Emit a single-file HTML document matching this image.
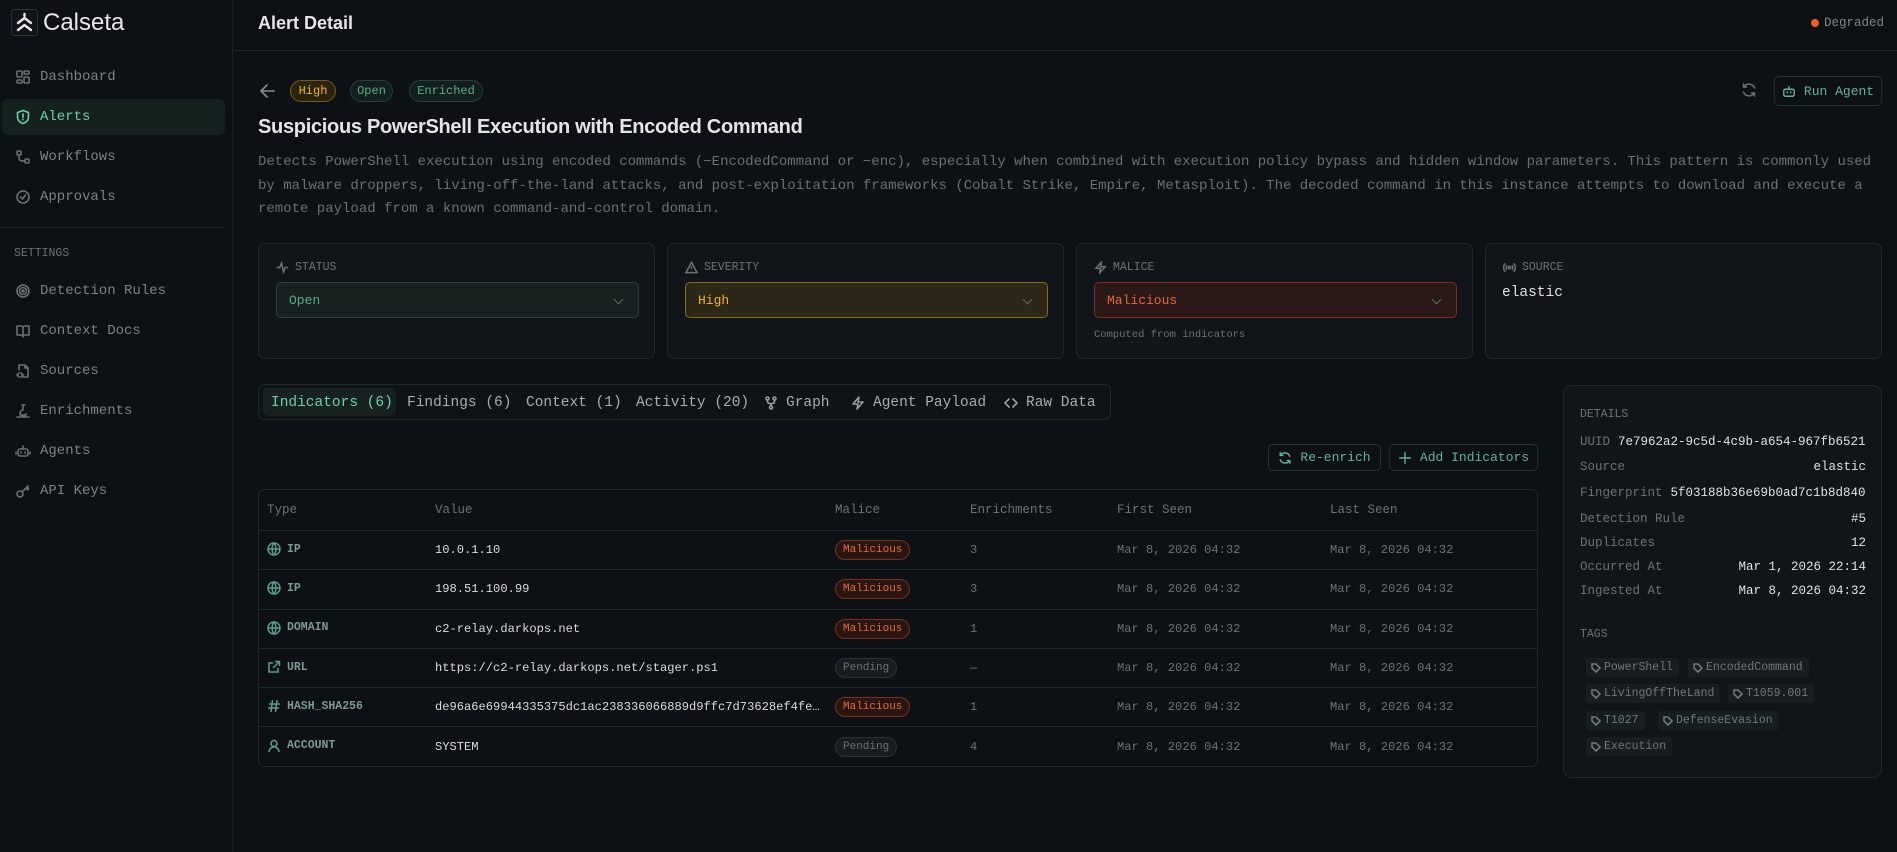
<!DOCTYPE html>
<html><head><meta charset="utf-8"><style>
*{box-sizing:border-box;margin:0;padding:0}
body{width:1897px;height:852px;background:#0d1014;color:#c9ccce;font-family:"Liberation Mono",monospace;overflow:hidden;position:relative}
.abs{position:absolute}
.sb{position:absolute;left:0;top:0;width:233px;height:852px;border-right:1px solid #1e2424;background:#0d1014}
.nav{position:absolute;left:2px;width:223px;height:36px;display:flex;align-items:center;padding-left:13px;font-size:14px;color:#7d8285;border-radius:6px}
.nav svg{width:16px;height:16px;margin-right:9px;fill:none;stroke:#6a7073;stroke-width:1.6;stroke-linecap:round;stroke-linejoin:round}
.nav.act{background:#15211f;color:#6fcdb0}
.nav.act svg{stroke:#6fcdb0}
.sans{font-family:"Liberation Sans",sans-serif}
.badge{position:absolute;top:80px;height:22px;border-radius:11px;font-size:12px;display:flex;align-items:center;justify-content:center}
.card{position:absolute;top:243px;width:397px;height:116px;border:1px solid #1e2a27;border-radius:7px;background:#111519}
.clab{position:absolute;left:17px;top:17px;font-size:11.5px;color:#6d7275;display:flex;align-items:center;gap:6px}
.clab svg{width:13px;height:13px;fill:none;stroke:#6d7275;stroke-width:1.6}
.sel{position:absolute;left:17px;top:38px;width:363px;height:36px;border-radius:5px;font-size:13px;display:flex;align-items:center;padding-left:12px}
.sel:after{content:"";position:absolute;right:16px;top:13px;width:6px;height:6px;border-right:1.3px solid #666;border-bottom:1.3px solid #666;transform:rotate(45deg)}
.tab{position:absolute;top:392px;font-size:14.5px;color:#a9adb0;display:flex;align-items:center;gap:8px;height:22px}
.tab svg{width:14px;height:14px;fill:none;stroke:#9a9ea0;stroke-width:1.6;stroke-linecap:round;stroke-linejoin:round}
.btn{position:absolute;top:444px;height:27px;border:1px solid #213430;border-radius:5px;color:#66b198;font-size:13px;display:flex;align-items:center;justify-content:center;gap:8px}
.btn svg{width:14px;height:14px;fill:none;stroke:#66b198;stroke-width:1.6;stroke-linecap:round}
table{position:absolute;left:258px;top:489px;width:1280px;border-collapse:separate;border-spacing:0;border:1px solid #1e2a27;border-radius:7px;font-size:12.1px}
td,th{height:39.3px;border-top:1px solid #1e2a27;text-align:left;font-weight:normal;padding:0;vertical-align:middle}
th{height:40px;border-top:none;color:#6d7275;font-size:12.5px}
td.ty{color:#7d9990;font-size:11.5px;font-weight:bold;padding-left:8px}
td.ty span{display:inline-flex;align-items:center;gap:6px;position:relative;top:1px}
td.ty svg{width:14px;height:14px;fill:none;stroke:#5f9c88;stroke-width:1.5}
td.v{color:#d9dbdc}
td.d{color:#6d7275}
td.e{color:#6d7275}
.mal{display:inline-block;height:20px;line-height:18px;padding:0 7px;border:1px solid #7a2e1c;background:#2a1611;color:#e8683a;border-radius:10px;font-size:11px}
.pen{display:inline-block;height:20px;line-height:18px;padding:0 7px;border:1px solid #2b3232;background:#171c1d;color:#6c7375;border-radius:10px;font-size:11px}
.det{position:absolute;left:1563px;top:385px;width:319px;height:393px;border:1px solid #1e2a27;border-radius:9px;background:#111519;overflow:hidden}
.dr{position:absolute;left:16px;width:286px;font-size:12.5px;display:flex;justify-content:space-between;white-space:nowrap;overflow:hidden}
.dr b{font-weight:normal;color:#6d7275;margin-right:8px}
.dr i{font-style:normal;color:#dfe1e2;overflow:hidden}
.tag{position:absolute;height:19px;background:#171d21;border-radius:3px;font-size:11.5px;color:#70787a;display:flex;align-items:center;padding:0 6px 0 5px;gap:3px}
.tag svg{width:10px;height:10px;fill:none;stroke:#70787a;stroke-width:1.6}
</style></head><body>
<div class="sb">
  <div class="abs" style="left:11px;top:9px;width:27px;height:27px;border:1px solid #2c3331;border-radius:3px;background:#111517">
    <svg width="25" height="25" viewBox="0 0 25 25" fill="none" stroke="#e6e6e6" stroke-width="2.4" stroke-linecap="round" stroke-linejoin="round"><path d="M12.5 4v2"/><path d="M6 13l6.5-5 6.5 5"/><path d="M6 20l6.5-5 6.5 5"/></svg>
  </div>
  <div class="abs sans" style="left:43px;top:9px;font-size:24px;color:#e8e8e8">Calseta</div>
  <div class="nav" style="top:59px"><svg viewBox="0 0 16 16"><rect x="2" y="2" width="5" height="6" rx="1"/><rect x="9" y="2" width="5" height="3" rx="1"/><rect x="9" y="8" width="5" height="6" rx="1"/><rect x="2" y="11" width="5" height="3" rx="1"/></svg>Dashboard</div>
  <div class="nav act" style="top:99px"><svg viewBox="0 0 16 16"><path d="M8 1.5l5.5 2v4.5c0 3.5-2.5 5.5-5.5 6.5-3-1-5.5-3-5.5-6.5V3.5z"/><path d="M8 5v3.5M8 10.5v.3"/></svg>Alerts</div>
  <div class="nav" style="top:139px"><svg viewBox="0 0 16 16"><rect x="2" y="2" width="4" height="4" rx="1"/><rect x="10" y="10" width="4" height="4" rx="1"/><path d="M4 6v3a3 3 0 003 3h3"/></svg>Workflows</div>
  <div class="nav" style="top:179px"><svg viewBox="0 0 16 16"><circle cx="8" cy="8" r="6"/><path d="M5.5 8l2 2 3-4"/></svg>Approvals</div>
  <div class="abs" style="left:0;top:227px;width:225px;height:1px;background:#23292a"></div>
  <div class="abs" style="left:14px;top:247px;font-size:11.5px;color:#6d7275">SETTINGS</div>
  <div class="nav" style="top:273px"><svg viewBox="0 0 16 16"><circle cx="8" cy="8" r="6"/><circle cx="8" cy="8" r="3.5"/><circle cx="8" cy="8" r="1"/></svg>Detection Rules</div>
  <div class="nav" style="top:313px"><svg viewBox="0 0 16 16"><path d="M2 3h4a2 2 0 012 2v9a2 2 0 00-2-2H2zM14 3h-4a2 2 0 00-2 2v9a2 2 0 012-2h4z"/></svg>Context Docs</div>
  <div class="nav" style="top:353px"><svg viewBox="0 0 16 16"><path d="M4 7V2h6l3 3v9H8"/><path d="M10 2v3h3M4 10l-2 2 2 2M6 10l2 2-2 2"/></svg>Sources</div>
  <div class="nav" style="top:393px"><svg viewBox="0 0 16 16"><path d="M2 14h12M5 12h6M7 2h3M8 2v5a3 3 0 103 4"/></svg>Enrichments</div>
  <div class="nav" style="top:433px"><svg viewBox="0 0 16 16"><rect x="3" y="6" width="10" height="7" rx="2"/><path d="M8 6V3M1 9v2M15 9v2M6 9v1M10 9v1"/></svg>Agents</div>
  <div class="nav" style="top:473px"><svg viewBox="0 0 16 16"><circle cx="5" cy="11" r="3"/><path d="M7 9l6-6M11 5l2 2M12 4l1.5 1.5"/></svg>API Keys</div>
</div>

<div class="abs" style="left:234px;top:50px;width:1663px;height:1px;background:#1e2a26"></div>
<div class="abs sans" style="left:258px;top:13px;font-size:18px;font-weight:bold;color:#e6e6e6">Alert Detail</div>
<div class="abs" style="left:1811px;top:19px;width:8px;height:8px;border-radius:50%;background:#ef5d22"></div>
<div class="abs" style="left:1824px;top:16px;font-size:12.5px;color:#818689">Degraded</div>

<svg class="abs" style="left:259px;top:83px" width="17" height="16" viewBox="0 0 17 16" fill="none" stroke="#8a8f92" stroke-width="1.6" stroke-linecap="round" stroke-linejoin="round"><path d="M15 8H2M8 2L2 8l6 6"/></svg>
<div class="badge" style="left:290px;width:46px;border:1px solid #7a5a14;background:#2a230f;color:#f1b52c">High</div>
<div class="badge" style="left:350px;width:43px;border:1px solid #24403a;background:#12201d;color:#5fa890">Open</div>
<div class="badge" style="left:409px;width:74px;border:1px solid #24403a;background:#12201d;color:#5fa890">Enriched</div>
<svg class="abs" style="left:1741px;top:82px" width="16" height="16" viewBox="0 0 16 16" fill="none" stroke="#6d7275" stroke-width="1.5" stroke-linecap="round"><path d="M13.5 6A6 6 0 002.8 5M2.5 10a6 6 0 0010.7 1"/><path d="M2.5 2v3h3M13.5 14v-3h-3"/></svg>
<div class="btn" style="left:1774px;top:76px;width:108px;height:30px;font-size:13px"><svg viewBox="0 0 16 16"><rect x="2" y="6" width="12" height="8" rx="2"/><path d="M8 6V3M6 9v1M10 9v1"/></svg>Run Agent</div>

<div class="abs sans" style="left:258px;top:116px;font-size:20px;font-weight:bold;color:#e4e5e6;letter-spacing:-0.3px">Suspicious PowerShell Execution with Encoded Command</div>
<div class="abs" style="left:258px;top:151px;width:1630px;font-size:14px;line-height:23.5px;color:#6a7074;white-space:nowrap">Detects PowerShell execution using encoded commands (−EncodedCommand or −enc), especially when combined with execution policy bypass and hidden window parameters. This pattern is commonly used<br>by malware droppers, living-off-the-land attacks, and post-exploitation frameworks (Cobalt Strike, Empire, Metasploit). The decoded command in this instance attempts to download and execute a<br>remote payload from a known command-and-control domain.</div>

<div class="card" style="left:258px"><div class="clab"><svg viewBox="0 0 14 14"><path d="M1 7h3l2-5 2 10 2-5h3"/></svg>STATUS</div><div class="sel" style="background:#162120;border:1px solid #29423b;color:#5fa890">Open</div></div>
<div class="card" style="left:667px"><div class="clab"><svg viewBox="0 0 14 14"><path d="M7 1.5L1 12.5h12z"/><path d="M7 5.5v3M7 10.3v.3"/></svg>SEVERITY</div><div class="sel" style="background:#2c2717;border:1px solid #8a6b1c;color:#f1b52c">High</div></div>
<div class="card" style="left:1076px"><div class="clab"><svg viewBox="0 0 14 14"><path d="M8 1L2 8h5l-1 5 6-7H7z"/></svg>MALICE</div><div class="sel" style="background:#2a1917;border:1px solid #7a3220;color:#e8683a">Malicious</div><div class="abs" style="left:17px;top:85px;font-size:10.5px;color:#6d7275">Computed from indicators</div></div>
<div class="card" style="left:1485px"><div class="clab"><svg viewBox="0 0 14 14"><circle cx="7" cy="7" r="1.2"/><path d="M4.5 4.5a3.5 3.5 0 000 5M9.5 4.5a3.5 3.5 0 010 5M2.5 2.5a6.3 6.3 0 000 9M11.5 2.5a6.3 6.3 0 010 9"/></svg>SOURCE</div><div class="abs" style="left:16px;top:41px;font-size:14.5px;color:#dfe1e2">elastic</div></div>

<div class="abs" style="left:258px;top:384px;width:853px;height:36px;border:1px solid #1e2a27;border-radius:6px;background:#0f1316"></div>
<div class="abs" style="left:263px;top:388px;width:133px;height:28px;border-radius:5px;background:#162120"></div>
<div class="tab" style="left:271px;color:#6fcdb0">Indicators (6)</div>
<div class="tab" style="left:407px">Findings (6)</div>
<div class="tab" style="left:526px">Context (1)</div>
<div class="tab" style="left:636px">Activity (20)</div>
<div class="tab" style="left:764px"><svg viewBox="0 0 14 14"><circle cx="3.5" cy="2.5" r="1.5"/><circle cx="10.5" cy="2.5" r="1.5"/><circle cx="7" cy="11.5" r="1.5"/><path d="M3.5 4v1.5a2 2 0 002 2h3a2 2 0 002-2V4M7 7.5V10"/></svg>Graph</div>
<div class="tab" style="left:851px"><svg viewBox="0 0 14 14"><path d="M8 1L2 8h5l-1 5 6-7H7z"/></svg>Agent Payload</div>
<div class="tab" style="left:1004px"><svg viewBox="0 0 14 14"><path d="M5 3L1 7l4 4M9 3l4 4-4 4"/></svg>Raw Data</div>

<div class="btn" style="left:1268px;width:113px"><svg viewBox="0 0 16 16"><path d="M13.5 6A6 6 0 002.8 5M2.5 10a6 6 0 0010.7 1"/><path d="M2.5 2v3h3M13.5 14v-3h-3"/></svg>Re-enrich</div>
<div class="btn" style="left:1389px;width:149px"><svg viewBox="0 0 16 16"><path d="M8 2v12M2 8h12"/></svg>Add Indicators</div>

<table>
<tr><th style="width:176px;padding-left:8px">Type</th><th style="width:400px">Value</th><th style="width:135px">Malice</th><th style="width:147px">Enrichments</th><th style="width:213px">First Seen</th><th>Last Seen</th></tr>
<tr><td class="ty"><span><svg viewBox="0 0 14 14"><circle cx="7" cy="7" r="6"/><path d="M1 7h12M7 1c-2.5 3-2.5 9 0 12M7 1c2.5 3 2.5 9 0 12"/></svg>IP</span></td><td class="v">10.0.1.10</td><td><span class="mal">Malicious</span></td><td class="e">3</td><td class="d">Mar 8, 2026 04:32</td><td class="d">Mar 8, 2026 04:32</td></tr>
<tr><td class="ty"><span><svg viewBox="0 0 14 14"><circle cx="7" cy="7" r="6"/><path d="M1 7h12M7 1c-2.5 3-2.5 9 0 12M7 1c2.5 3 2.5 9 0 12"/></svg>IP</span></td><td class="v">198.51.100.99</td><td><span class="mal">Malicious</span></td><td class="e">3</td><td class="d">Mar 8, 2026 04:32</td><td class="d">Mar 8, 2026 04:32</td></tr>
<tr><td class="ty"><span><svg viewBox="0 0 14 14"><circle cx="7" cy="7" r="6"/><path d="M1 7h12M7 1c-2.5 3-2.5 9 0 12M7 1c2.5 3 2.5 9 0 12"/></svg>DOMAIN</span></td><td class="v">c2-relay.darkops.net</td><td><span class="mal">Malicious</span></td><td class="e">1</td><td class="d">Mar 8, 2026 04:32</td><td class="d">Mar 8, 2026 04:32</td></tr>
<tr><td class="ty"><span><svg viewBox="0 0 14 14"><path d="M11 8v4H2V3h4M8 1.5h4.5V6M12.5 1.5L6 8"/></svg>URL</span></td><td class="v">https://c2-relay.darkops.net/stager.ps1</td><td><span class="pen">Pending</span></td><td class="e">—</td><td class="d">Mar 8, 2026 04:32</td><td class="d">Mar 8, 2026 04:32</td></tr>
<tr><td class="ty"><span><svg viewBox="0 0 14 14"><path d="M2 5h11M1 9h11M5.5 1l-1.5 12M10 1L8.5 13"/></svg>HASH_SHA256</span></td><td class="v">de96a6e69944335375dc1ac238336066889d9ffc7d73628ef4fe…</td><td><span class="mal">Malicious</span></td><td class="e">1</td><td class="d">Mar 8, 2026 04:32</td><td class="d">Mar 8, 2026 04:32</td></tr>
<tr><td class="ty"><span><svg viewBox="0 0 14 14"><circle cx="7" cy="4.5" r="3"/><path d="M2 13a5 5 0 0110 0"/></svg>ACCOUNT</span></td><td class="v">SYSTEM</td><td><span class="pen">Pending</span></td><td class="e">4</td><td class="d">Mar 8, 2026 04:32</td><td class="d">Mar 8, 2026 04:32</td></tr>
</table>

<div class="det">
  <div class="abs" style="left:16px;top:22px;font-size:11.5px;color:#6d7275">DETAILS</div>
  <div class="dr" style="top:49px;justify-content:flex-start"><b>UUID</b><i>7e7962a2-9c5d-4c9b-a654-967fb6521c0e</i></div>
  <div class="dr" style="top:74px"><b>Source</b><i>elastic</i></div>
  <div class="dr" style="top:100px;justify-content:flex-start"><b>Fingerprint</b><i>5f03188b36e69b0ad7c1b8d84041a</i></div>
  <div class="dr" style="top:126px"><b>Detection Rule</b><i>#5</i></div>
  <div class="dr" style="top:150px"><b>Duplicates</b><i>12</i></div>
  <div class="dr" style="top:174px"><b>Occurred At</b><i>Mar 1, 2026 22:14</i></div>
  <div class="dr" style="top:198px"><b>Ingested At</b><i>Mar 8, 2026 04:32</i></div>
  <div class="abs" style="left:16px;top:242px;font-size:11.5px;color:#6d7275">TAGS</div>
  <div class="tag" style="left:22px;top:272px"><svg viewBox="0 0 10 10"><path d="M1 1h4l4 4-4 4-4-4z"/></svg>PowerShell</div>
  <div class="tag" style="left:124px;top:272px"><svg viewBox="0 0 10 10"><path d="M1 1h4l4 4-4 4-4-4z"/></svg>EncodedCommand</div>
  <div class="tag" style="left:22px;top:298px"><svg viewBox="0 0 10 10"><path d="M1 1h4l4 4-4 4-4-4z"/></svg>LivingOffTheLand</div>
  <div class="tag" style="left:164px;top:298px"><svg viewBox="0 0 10 10"><path d="M1 1h4l4 4-4 4-4-4z"/></svg>T1059.001</div>
  <div class="tag" style="left:22px;top:325px"><svg viewBox="0 0 10 10"><path d="M1 1h4l4 4-4 4-4-4z"/></svg>T1027</div>
  <div class="tag" style="left:94px;top:325px"><svg viewBox="0 0 10 10"><path d="M1 1h4l4 4-4 4-4-4z"/></svg>DefenseEvasion</div>
  <div class="tag" style="left:22px;top:351px"><svg viewBox="0 0 10 10"><path d="M1 1h4l4 4-4 4-4-4z"/></svg>Execution</div>
</div>
</body></html>
